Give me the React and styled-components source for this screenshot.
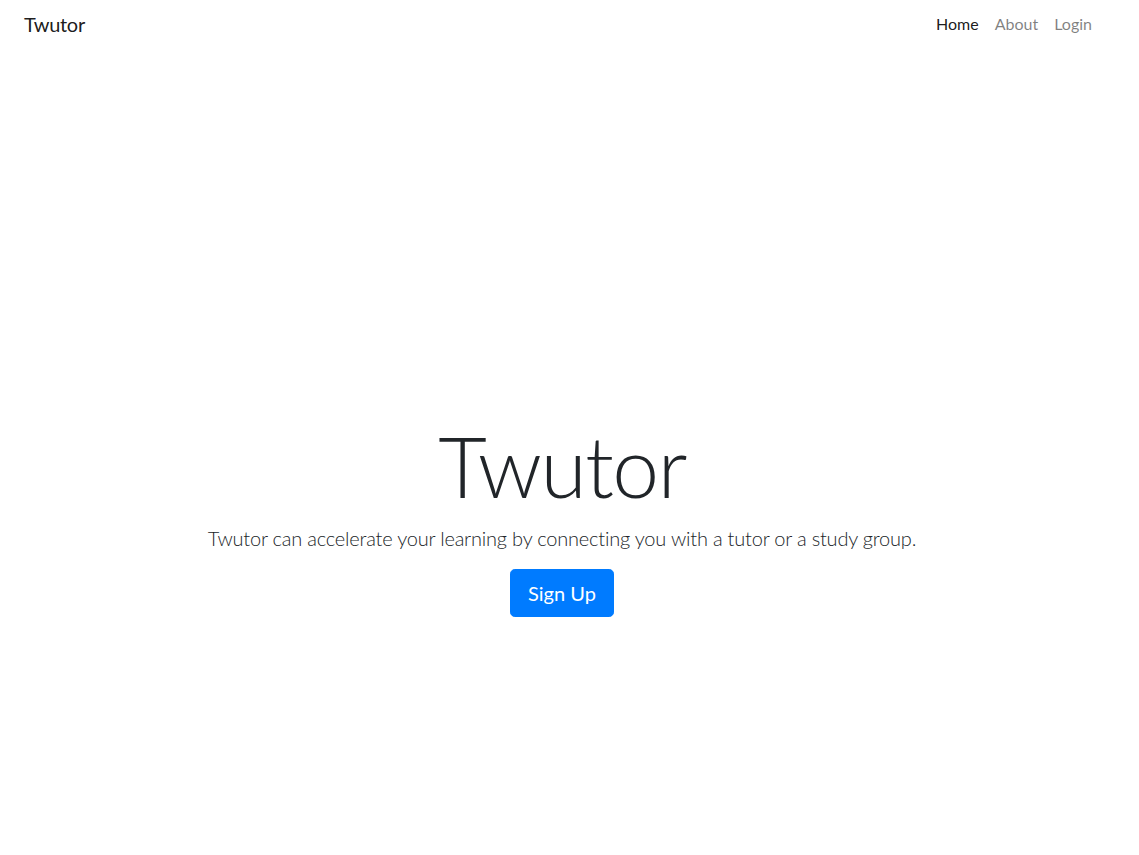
import React from "react";
import styled, { createGlobalStyle } from "styled-components";

const Global = createGlobalStyle`
  *, *::before, *::after { box-sizing: border-box; }
  html, body { margin: 0; padding: 0; background: #fff; }
  body {
    font-family: Lato, "Open Sans", "Liberation Sans", sans-serif;
    font-size: 16px;
    line-height: 1.5;
    color: #212529;
  }
`;

const Page = styled.div`
  display: flex;
  flex-direction: column;
  min-height: 100vh;
  padding-right: 15px;
`;

const Navbar = styled.nav`
  display: flex;
  align-items: center;
  justify-content: space-between;
  padding: 4px 24px 12px 24px;
`;

const Brand = styled.a`
  font-size: 20px;
  line-height: 30px;
  padding: 5px 0;
  letter-spacing: -0.3px;
  color: rgba(0, 0, 0, 0.9);
  text-decoration: none;
`;

const NavList = styled.ul`
  display: flex;
  list-style: none;
  margin: 0;
  padding: 0;
`;

const NavLink = styled.a`
  display: block;
  padding: 8px;
  font-size: 16px;
  line-height: 24px;
  text-decoration: none;
  color: ${(p) => (p.$active ? "rgba(0,0,0,0.9)" : "rgba(0,0,0,0.5)")};
`;

const Hero = styled.main`
  display: flex;
  flex-direction: column;
  align-items: center;
  text-align: center;
  padding-top: 360px;
`;

const Title = styled.h1`
  margin: 0 0 6px;
  font-size: 84px;
  font-weight: 300;
  line-height: 1.2;
  letter-spacing: -1.5px;
  color: #212529;
`;

const Lead = styled.p`
  margin: 0 0 16px;
  font-size: 20px;
  font-weight: 300;
  line-height: 30px;
  letter-spacing: -0.2px;
`;

const Button = styled.a`
  display: inline-block;
  padding: 8px 17px;
  font-size: 20px;
  line-height: 30px;
  color: #fff;
  background: #007bff;
  border: 1px solid #007bff;
  border-radius: 4.8px;
  text-decoration: none;
`;

export default function App() {
  return (
    <Page>
      <Global />
      <Navbar>
        <Brand href="#">Twutor</Brand>
        <NavList>
          <li><NavLink href="#" $active>Home</NavLink></li>
          <li><NavLink href="#">About</NavLink></li>
          <li><NavLink href="#">Login</NavLink></li>
        </NavList>
      </Navbar>
      <Hero>
        <Title>Twutor</Title>
        <Lead>Twutor can accelerate your learning by connecting you with a tutor or a study group.</Lead>
        <Button href="#">Sign Up</Button>
      </Hero>
    </Page>
  );
}
